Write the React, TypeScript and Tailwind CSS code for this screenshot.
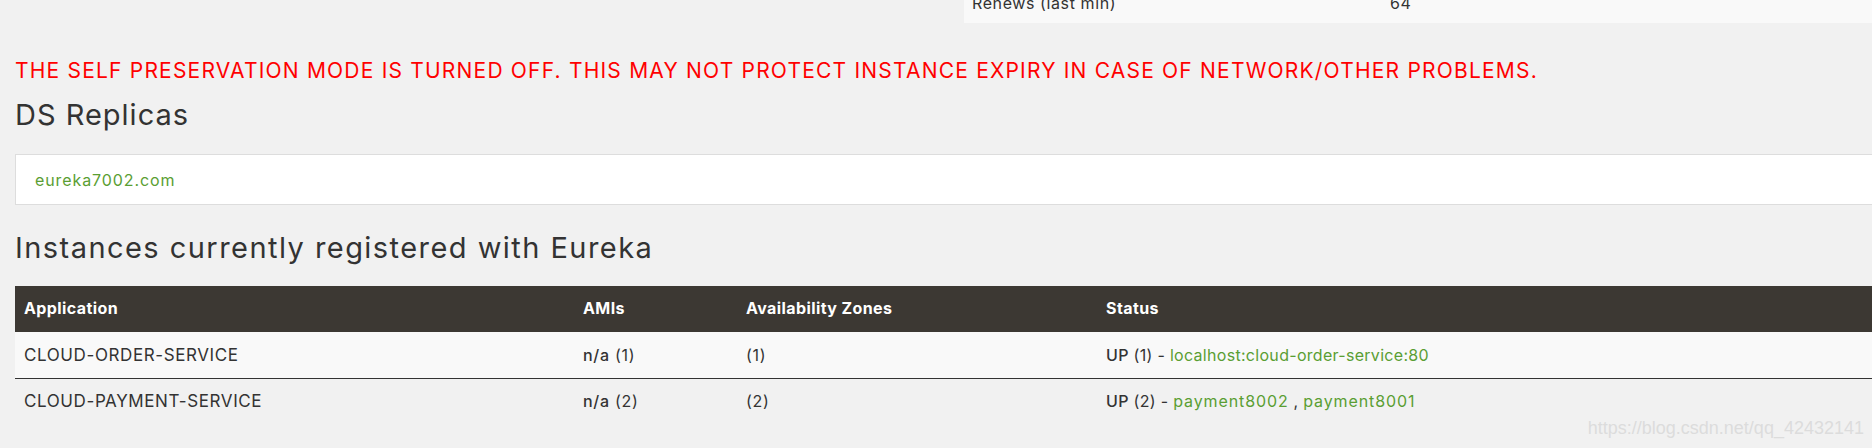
const rows = [
  {
    app: "CLOUD-ORDER-SERVICE",
    count: 1,
    links: ["localhost:cloud-order-service:80"],
  },
  {
    app: "CLOUD-PAYMENT-SERVICE",
    count: 2,
    links: ["payment8002", "payment8001"],
  },
];

export default function App() {
  return (
    <div className="relative h-[448px] w-full overflow-hidden bg-[#f1f1f1] font-['Inter',sans-serif] text-[#333333]">
      <div className="-mr-[40px] pl-[15px]">
        {/* general info panel, scrolled past */}
        <div className="grid grid-cols-[949px_1fr]">
          <div />
          <div className="h-[23px] overflow-hidden bg-[#f9f9f9]">
            <div className="-mt-[7px] grid grid-cols-[418px_1fr] px-2 text-[16px] leading-[20px] tracking-[0.6px]">
              <span>Renews (last min)</span>
              <span>64</span>
            </div>
          </div>
        </div>

        <p className="mt-[36px] text-[21px] leading-[24px] tracking-[1.2px] text-[#ff0000]">
          THE SELF PRESERVATION MODE IS TURNED OFF. THIS MAY NOT PROTECT INSTANCE EXPIRY IN CASE OF NETWORK/OTHER PROBLEMS.
        </p>

        <h2 className="mt-[14px] text-[29px] leading-[36px] tracking-[1px]">DS Replicas</h2>
        <div className="mt-[21px] h-[51px] border border-[#dddddd] bg-white pl-[19px] pt-[13px]">
          <a className="text-[16px] leading-[20px] tracking-[0.9px] text-[#5a9e33]">eureka7002.com</a>
        </div>

        <h2 className="mt-[25px] text-[29px] leading-[36px] tracking-[1.45px]">
          Instances currently registered with Eureka
        </h2>

        <div className="mt-[20px]">
          <div className="grid h-[46px] grid-cols-[559px_163px_360px_1fr] bg-[#3c3833] pt-[12px] text-[16px] font-bold leading-[20px] tracking-[0.4px] text-white">
            <div className="pl-[9px]">Application</div>
            <div className="pl-[9px]">AMIs</div>
            <div className="pl-[9px]">Availability Zones</div>
            <div className="pl-[9px]">Status</div>
          </div>
          {rows.map((r, i) => (
            <div
              key={r.app}
              className={
                i === 0
                  ? "grid h-[46px] grid-cols-[559px_163px_360px_1fr] bg-[#f9f9f9] pt-[13px] leading-[20px]"
                  : "grid h-[46px] grid-cols-[559px_163px_360px_1fr] border-t border-[#333333] pt-[12px] leading-[20px]"
              }
            >
              <div className="pl-[9px] text-[17px] tracking-[0.6px]">{r.app}</div>
              <div className="pl-[9px] text-[16px] tracking-[0.7px]">
                <b className="font-medium">n/a</b> ({r.count})
              </div>
              <div className="pl-[9px] text-[16px] tracking-[0.7px]">({r.count})</div>
              <div className="pl-[9px] text-[16px] tracking-[0.3px]">
                <b className="font-medium">UP</b> ({r.count}) -{" "}
                {r.links.map((l, j) => (
                  <span key={l}>
                    {j > 0 && " , "}
                    <a className={j > 0 || r.links.length > 1 ? "tracking-[0.9px] text-[#5a9e33]" : "text-[#5a9e33]"}>{l}</a>
                  </span>
                ))}
              </div>
            </div>
          ))}
        </div>
      </div>

      {/* csdn watermark */}
      <span className="absolute right-[8px] top-[417px] font-['Liberation_Sans',sans-serif] text-[18px] leading-[22px] text-[#dcdcdc]">
        https://blog.csdn.net/qq_42432141
      </span>
    </div>
  );
}
